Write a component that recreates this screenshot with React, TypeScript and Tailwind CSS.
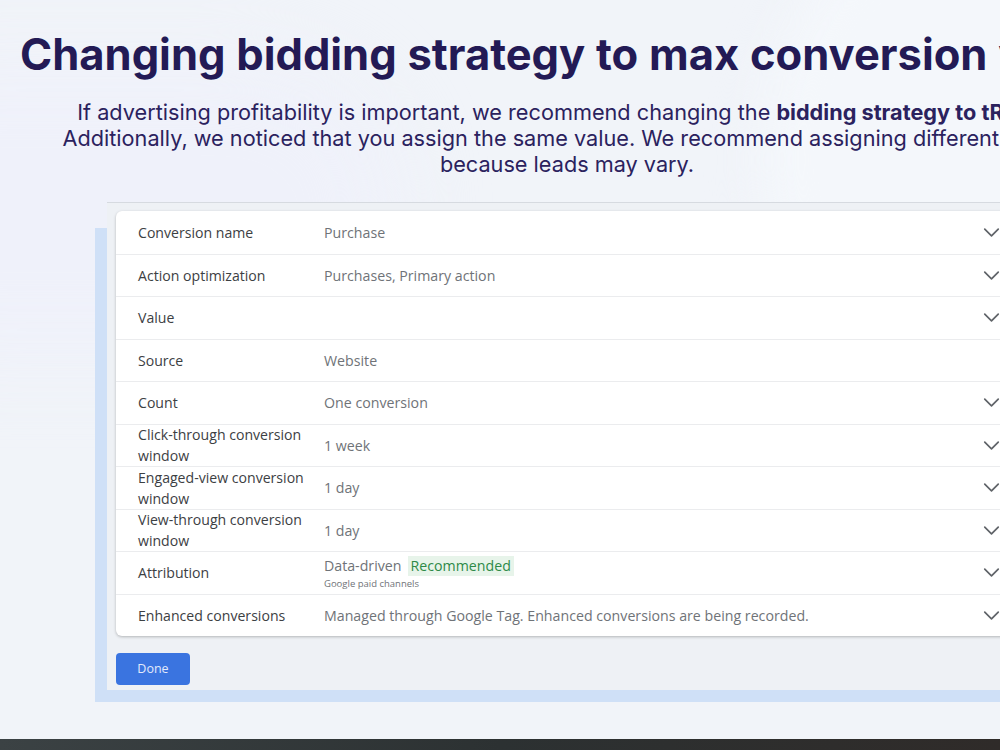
import { ChevronDown } from "lucide-react"

type Row = {
  label: string[]
  value?: string
  chevron?: boolean
  attribution?: boolean
}

const rows: Row[] = [
  { label: ["Conversion name"], value: "Purchase", chevron: true },
  { label: ["Action optimization"], value: "Purchases, Primary action", chevron: true },
  { label: ["Value"], chevron: true },
  { label: ["Source"], value: "Website" },
  { label: ["Count"], value: "One conversion", chevron: true },
  { label: ["Click-through conversion", "window"], value: "1 week", chevron: true },
  { label: ["Engaged-view conversion", "window"], value: "1 day", chevron: true },
  { label: ["View-through conversion", "window"], value: "1 day", chevron: true },
  { label: ["Attribution"], attribution: true, chevron: true },
  {
    label: ["Enhanced conversions"],
    value: "Managed through Google Tag. Enhanced conversions are being recorded.",
    chevron: true,
  },
]

function SettingRow({ row, first }: { row: Row; first: boolean }) {
  return (
    <div
      className={`flex h-[42.5px] items-center pl-[22px] pr-[13px] ${first ? "" : "border-t border-[#ebecee]"}`}
    >
      <div className="w-[186px] text-[14.1px] leading-[21px] text-[#3c4043]">
        {row.label.map((l) => (
          <div key={l}>{l}</div>
        ))}
      </div>
      <div className="flex-1 text-[14.2px] text-[#6f7378]">
        {row.attribution ? (
          <div className="flex flex-col pt-[2px]">
            <div className="flex items-center gap-[6px] leading-[20px]">
              <span>Data-driven</span>
              <span className="bg-[#e7f4ea] px-[3px] text-[#2d8a48]">Recommended</span>
            </div>
            <span className="mt-[1px] text-[9.5px] leading-[14px] text-[#6f7378]">Google paid channels</span>
          </div>
        ) : (
          row.value
        )}
      </div>
      {row.chevron && <ChevronDown size={27} strokeWidth={1.5} className="text-[#5f6368]" />}
    </div>
  )
}

export default function App() {
  return (
    <div className="relative flex h-[750px] w-[1000px] flex-col overflow-hidden bg-[#f1f4f9] font-['Inter',sans-serif]">
      {/* soft background blobs */}
      <div className="absolute left-[760px] top-[-140px] h-[600px] w-[600px] rounded-full bg-[#f4f7fb] blur-xl" />
      <div className="absolute left-[-200px] top-[60px] h-[300px] w-[600px] rounded-full bg-[#eff1fa] blur-2xl" />

      <div className="relative flex w-[1134px] flex-col items-center">
        <h1 className="mt-[32px] whitespace-nowrap text-[43.5px] font-bold leading-[44px] text-[#231a55] [word-spacing:0.5px]">
          Changing bidding strategy to max conversion value
        </h1>
        <p className="mt-[23px] whitespace-nowrap text-center text-[21.7px] leading-[26px] text-[#2b225e]">
          If advertising profitability is important, we recommend changing the{" "}
          <b className="font-bold">bidding strategy to tROAS.</b>
          <br />
          Additionally, we noticed that you assign the same value. We recommend assigning different values
          <br />
          because leads may vary.
        </p>
      </div>

      {/* screenshot panel */}
      <div className="relative ml-[107px] mt-[25px] w-[920px] font-['Open_Sans',sans-serif]">
        <div className="absolute bottom-[-12px] left-[-12px] right-0 top-[26px] bg-[#cfe0f7]" />
        <div className="relative border-t border-[#d6dae0] bg-[#eef1f5] pb-[5px] pt-[8px]">
          <div className="ml-[9px] mr-[9px] rounded-[6px] bg-white shadow-[0_1px_3px_rgba(0,0,0,0.25)]">
            {rows.map((r, i) => (
              <SettingRow key={r.label[0]} row={r} first={i === 0} />
            ))}
          </div>
          <button className="ml-[9px] mt-[17px] flex h-[32px] w-[74px] items-center justify-center rounded-[4px] bg-[#3a74e0] text-[12.5px] text-[#e2eafb]">
            Done
          </button>
        </div>
      </div>

      <div className="relative mt-auto h-[11px] bg-gradient-to-r from-[#3b4244] via-[#2c3132] to-[#2f2b29]" />
    </div>
  )
}
